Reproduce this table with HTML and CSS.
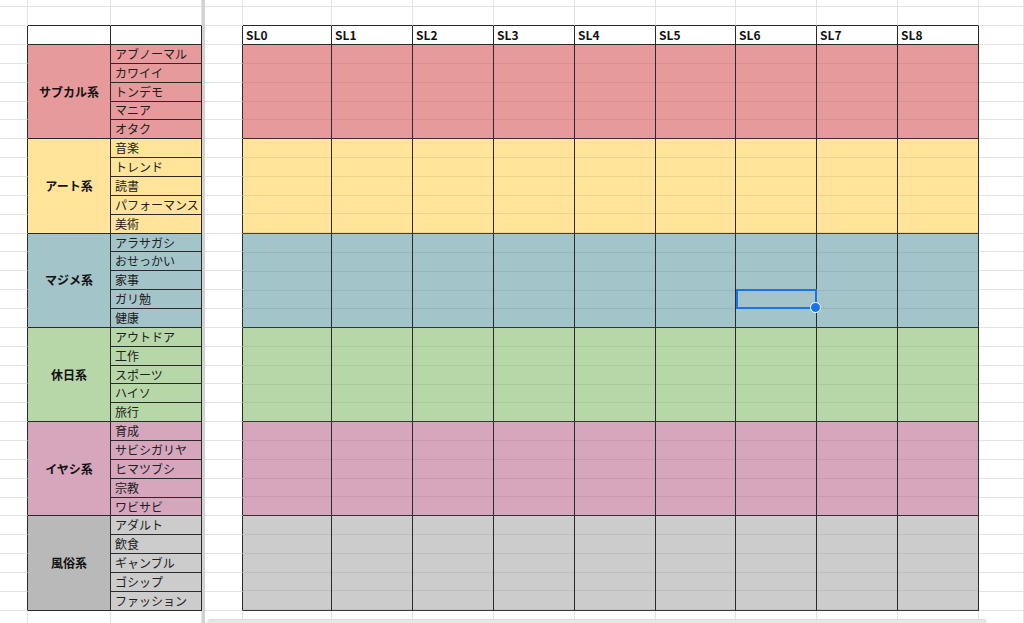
FILE: index.html
```html
<!DOCTYPE html>
<html lang="ja">
<head>
<meta charset="utf-8">
<title>Sheet</title>
<link rel="stylesheet" href="styles.css">
</head>
<body>
<div class="sheet">
  <div class="frz"></div>

  <div class="g"></div><div class="g"></div><div class="g"></div><div class="g"></div>
  <div class="g"></div><div class="g"></div><div class="g"></div><div class="g"></div><div class="g"></div><div class="g"></div><div class="g"></div><div class="g"></div><div class="g"></div>
  <div class="g"></div>

  <div class="g"></div><div class="gt"></div><div class="gt"></div><div class="g"></div>
  <div class="gt"></div><div class="gt"></div><div class="gt"></div><div class="gt"></div><div class="gt"></div><div class="gt"></div><div class="gt"></div><div class="gt"></div><div class="gt"></div>
  <div class="g"></div>

  <div class="ga"></div><div class="h"></div><div class="h"></div><div class="ga"></div>
  <div class="h">SL0</div><div class="h">SL1</div><div class="h">SL2</div><div class="h">SL3</div><div class="h">SL4</div><div class="h">SL5</div><div class="h">SL6</div><div class="h">SL7</div><div class="h">SL8</div>
  <div class="g"></div>

  <!-- サブカル系 -->
  <div class="ga"></div><div class="grp red">サブカル系</div><div class="it red">アブノーマル</div><div class="ga"></div>
  <div class="sl red"></div><div class="sl red"></div><div class="sl red"></div><div class="sl red"></div><div class="sl red"></div><div class="sl red"></div><div class="sl red"></div><div class="sl red"></div><div class="sl red"></div>
  <div class="g"></div>
  <div class="ga"></div><div class="it red">カワイイ</div><div class="ga"></div><div class="g"></div>
  <div class="ga"></div><div class="it red">トンデモ</div><div class="ga"></div><div class="g"></div>
  <div class="ga"></div><div class="it red">マニア</div><div class="ga"></div><div class="g"></div>
  <div class="ga"></div><div class="it red">オタク</div><div class="ga"></div><div class="g"></div>

  <!-- アート系 -->
  <div class="ga"></div><div class="grp yel">アート系</div><div class="it yel">音楽</div><div class="ga"></div>
  <div class="sl yel"></div><div class="sl yel"></div><div class="sl yel"></div><div class="sl yel"></div><div class="sl yel"></div><div class="sl yel"></div><div class="sl yel"></div><div class="sl yel"></div><div class="sl yel"></div>
  <div class="g"></div>
  <div class="ga"></div><div class="it yel">トレンド</div><div class="ga"></div><div class="g"></div>
  <div class="ga"></div><div class="it yel">読書</div><div class="ga"></div><div class="g"></div>
  <div class="ga"></div><div class="it yel">パフォーマンス</div><div class="ga"></div><div class="g"></div>
  <div class="ga"></div><div class="it yel">美術</div><div class="ga"></div><div class="g"></div>

  <!-- マジメ系 -->
  <div class="ga"></div><div class="grp teal">マジメ系</div><div class="it teal">アラサガシ</div><div class="ga"></div>
  <div class="sl teal"></div><div class="sl teal"></div><div class="sl teal"></div><div class="sl teal"></div><div class="sl teal"></div><div class="sl teal"></div><div class="sl teal act"><div class="sel"></div></div><div class="sl teal"></div><div class="sl teal"></div>
  <div class="g"></div>
  <div class="ga"></div><div class="it teal">おせっかい</div><div class="ga"></div><div class="g"></div>
  <div class="ga"></div><div class="it teal">家事</div><div class="ga"></div><div class="g"></div>
  <div class="ga"></div><div class="it teal">ガリ勉</div><div class="ga"></div><div class="g"></div>
  <div class="ga"></div><div class="it teal">健康</div><div class="ga"></div><div class="g"></div>

  <!-- 休日系 -->
  <div class="ga"></div><div class="grp grn">休日系</div><div class="it grn">アウトドア</div><div class="ga"></div>
  <div class="sl grn"></div><div class="sl grn"></div><div class="sl grn"></div><div class="sl grn"></div><div class="sl grn"></div><div class="sl grn"></div><div class="sl grn"></div><div class="sl grn"></div><div class="sl grn"></div>
  <div class="g"></div>
  <div class="ga"></div><div class="it grn">工作</div><div class="ga"></div><div class="g"></div>
  <div class="ga"></div><div class="it grn">スポーツ</div><div class="ga"></div><div class="g"></div>
  <div class="ga"></div><div class="it grn">ハイソ</div><div class="ga"></div><div class="g"></div>
  <div class="ga"></div><div class="it grn">旅行</div><div class="ga"></div><div class="g"></div>

  <!-- イヤシ系 -->
  <div class="ga"></div><div class="grp pink">イヤシ系</div><div class="it pink">育成</div><div class="ga"></div>
  <div class="sl pink"></div><div class="sl pink"></div><div class="sl pink"></div><div class="sl pink"></div><div class="sl pink"></div><div class="sl pink"></div><div class="sl pink"></div><div class="sl pink"></div><div class="sl pink"></div>
  <div class="g"></div>
  <div class="ga"></div><div class="it pink">サビシガリヤ</div><div class="ga"></div><div class="g"></div>
  <div class="ga"></div><div class="it pink">ヒマツブシ</div><div class="ga"></div><div class="g"></div>
  <div class="ga"></div><div class="it pink">宗教</div><div class="ga"></div><div class="g"></div>
  <div class="ga"></div><div class="it pink">ワビサビ</div><div class="ga"></div><div class="g"></div>

  <!-- 風俗系 -->
  <div class="ga"></div><div class="grp gray dark">風俗系</div><div class="it gray">アダルト</div><div class="ga"></div>
  <div class="sl gray"></div><div class="sl gray"></div><div class="sl gray"></div><div class="sl gray"></div><div class="sl gray"></div><div class="sl gray"></div><div class="sl gray"></div><div class="sl gray"></div><div class="sl gray"></div>
  <div class="g"></div>
  <div class="ga"></div><div class="it gray">飲食</div><div class="ga"></div><div class="g"></div>
  <div class="ga"></div><div class="it gray">ギャンブル</div><div class="ga"></div><div class="g"></div>
  <div class="ga"></div><div class="it gray">ゴシップ</div><div class="ga"></div><div class="g"></div>
  <div class="ga"></div><div class="it gray">ファッション</div><div class="ga"></div><div class="g"></div>

  <div class="g"></div><div class="g"></div><div class="g"></div><div class="g"></div>
  <div class="g"></div><div class="g"></div><div class="g"></div><div class="g"></div><div class="g"></div><div class="g"></div><div class="g"></div><div class="g"></div><div class="g"></div>
  <div class="g"></div>
</div>
<div class="hscroll"></div>
</body>
</html>
```

FILE: styles.css
```css
* { box-sizing: border-box; }

html, body {
  margin: 0;
  height: 100%;
}

body {
  position: relative;
  overflow: hidden;
  background: #fff;
  font-family: "Noto Sans CJK JP", "Noto Sans", sans-serif;
  font-size: 12px;
  line-height: 1;
  color: #202020;
}

.sheet {
  display: grid;
  width: 1024px;
  height: 623px;
  overflow: hidden;
  grid-template-columns: 28px 83px 91px 3px 38px 89px 81px 81px 81px 81px 80px 81px 81px 81px 1fr;
  grid-template-rows: 7.27px repeat(32, 18.867px) 20px;
}

.sheet > div {
  min-width: 0;
  min-height: 0;
}

.frz {
  grid-column: 4;
  grid-row: 1 / -1;
  background: #d2d2d2;
}

.g {
  border-right: 1px solid #e2e3e3;
  border-bottom: 1px solid #e2e3e3;
}

.gt {
  border-right: 1px solid #e2e3e3;
  border-bottom: 1px solid #2a2a2a;
}

.ga {
  border-right: 1px solid #2a2a2a;
  border-bottom: 1px solid #e2e3e3;
}

.h,
.grp,
.it,
.sl {
  border-right: 1px solid #2a2a2a;
  border-bottom: 1px solid #2a2a2a;
}

.h {
  display: flex;
  align-items: center;
  padding-left: 3px;
  font-weight: 700;
  color: #111;
}

.grp {
  grid-row: span 5;
  display: flex;
  align-items: center;
  justify-content: center;
  font-weight: 700;
  color: #111;
}

.it {
  display: flex;
  align-items: center;
  padding-left: 4px;
  white-space: nowrap;
}

.sl {
  grid-row: span 5;
  position: relative;
  border-bottom-color: rgba(0, 0, 0, 0.72);
  background-image: repeating-linear-gradient(
    to bottom,
    transparent 0,
    transparent 17.867px,
    rgba(0, 0, 0, 0.07) 17.867px,
    rgba(0, 0, 0, 0.07) 18.867px
  );
}

.red { background-color: #e79a9b; }
.yel { background-color: #ffe49a; }
.teal { background-color: #a3c4c9; }
.grn { background-color: #b7d7a8; }
.pink { background-color: #d6a6bd; }
.gray { background-color: #cccccc; }
.gray.dark { background-color: #b9b9b9; }

.act { z-index: 1; }

.sel {
  position: absolute;
  left: 0;
  right: -1px;
  top: 55px;
  height: 20px;
  border: 2px solid #1a73e8;
}

.sel::after {
  content: "";
  position: absolute;
  right: -6px;
  bottom: -6px;
  width: 9px;
  height: 9px;
  border-radius: 50%;
  background: #1a73e8;
  border: 1px solid #fff;
}

.hscroll {
  position: absolute;
  left: 207px;
  top: 619px;
  width: 780px;
  height: 8px;
  border-radius: 4px;
  background: #e6e6e6;
  border-top: 1px solid #dadada;
}
```
